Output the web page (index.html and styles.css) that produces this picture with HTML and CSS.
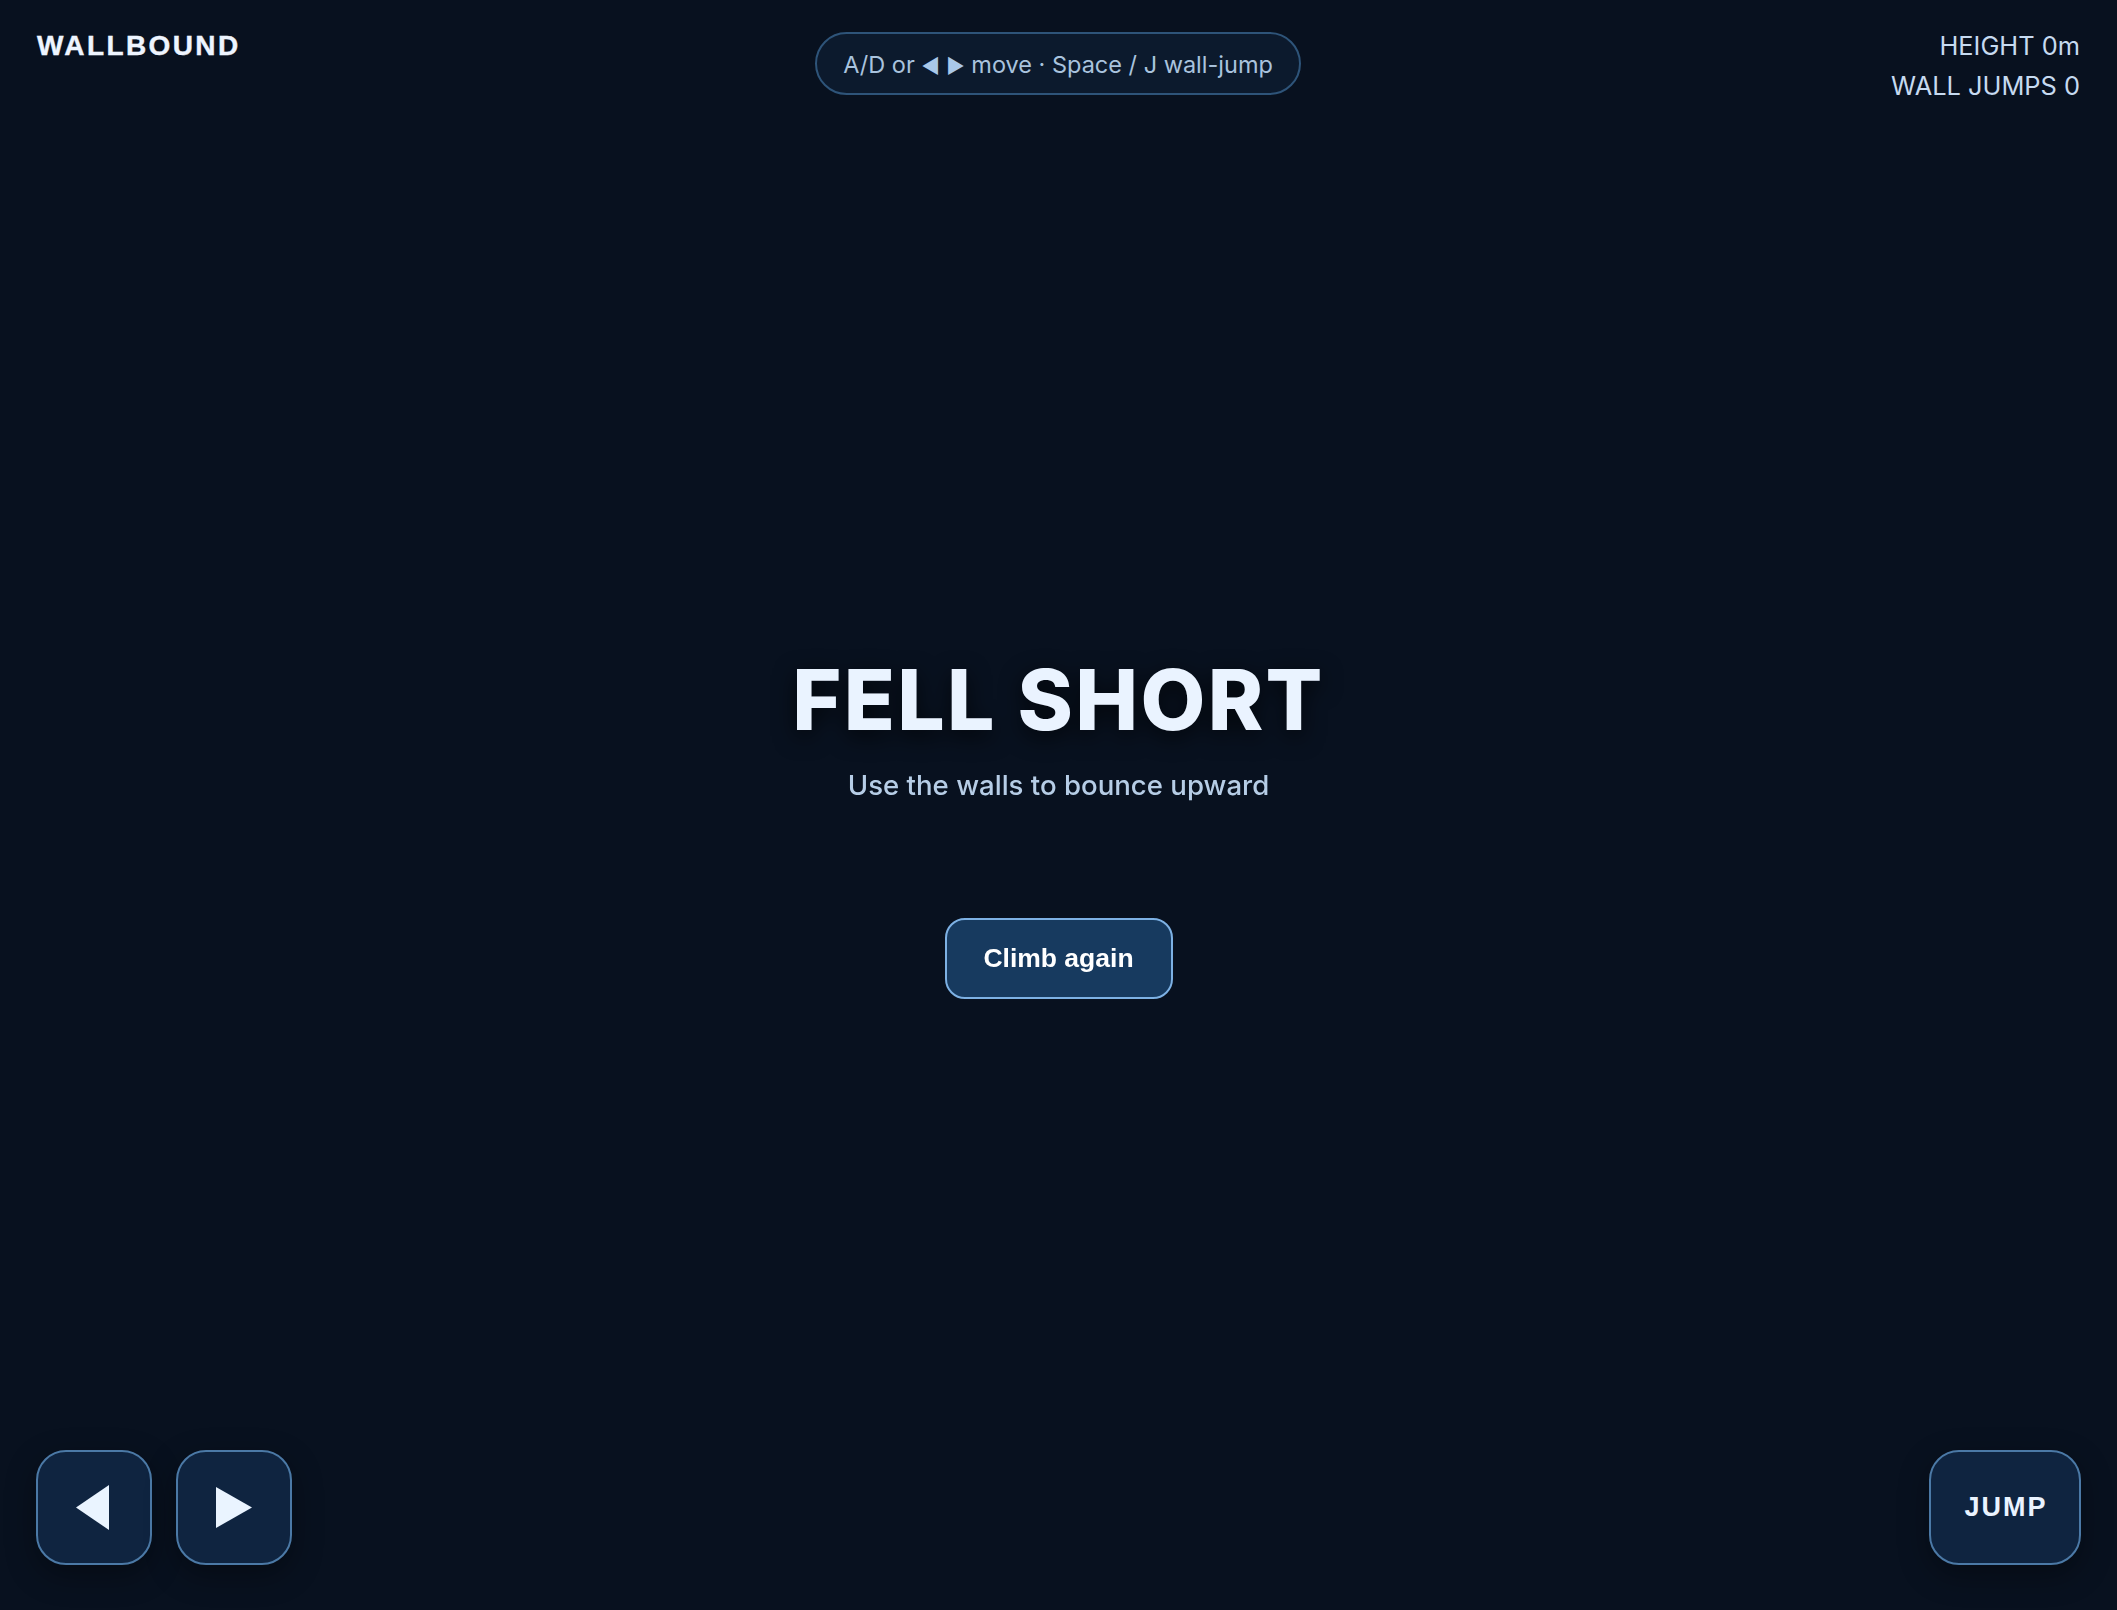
FILE: index.html
```html
<!DOCTYPE html>
<html lang="en">
<head>
<meta charset="utf-8">
<title>Wallbound</title>
<link rel="stylesheet" href="styles.css">
</head>
<body>
<div class="app">
  <header class="topbar">
    <div class="brand">WALLBOUND</div>
    <div class="hint">A/D or <span class="tri">◀</span> <span class="tri">▶</span> move · Space / J wall-jump</div>
    <div class="stats">
      <div class="stat">HEIGHT 0m</div>
      <div class="stat">WALL JUMPS 0</div>
    </div>
  </header>
  <main class="field"></main>
  <footer class="controls">
    <div class="dpad">
      <button class="pad pad-left" aria-label="Left">
        <svg width="33" height="45" viewBox="0 0 33 45"><polygon points="33,0 33,45 0,22.5" fill="#eaf4ff"/></svg>
      </button>
      <button class="pad" aria-label="Right">
        <svg width="36" height="41" viewBox="0 0 36 41"><polygon points="0,0 0,41 36,20.5" fill="#eaf4ff"/></svg>
      </button>
    </div>
    <button class="pad jump">JUMP</button>
  </footer>
</div>
<div class="overlay">
  <h1 class="title">FELL SHORT</h1>
  <p class="subtitle">Use the walls to bounce upward</p>
  <button class="again">Climb again</button>
</div>
</body>
</html>
```
FILE: styles.css
```css
html, body {
  margin: 0;
  height: 100%;
  background: #08111f;
  color: #eaf3ff;
  font-family: "Inter", "Liberation Sans", sans-serif;
  overflow: hidden;
}

.app {
  height: 100vh;
  box-sizing: border-box;
  display: grid;
  grid-template-rows: auto 1fr auto;
  padding: 26px 37px 45px 36px;
}

.topbar {
  display: grid;
  grid-template-columns: 1fr auto 1fr;
  align-items: start;
}

.brand {
  margin-top: 4px;
  margin-left: 1px;
  font-family: "Liberation Sans", Arial, sans-serif;
  font-weight: 700;
  font-size: 28px;
  letter-spacing: 2.4px;
  color: #eef5ff;
  line-height: normal;
  -webkit-text-stroke: 0.4px #eef5ff;
}

.hint {
  margin-top: 6px;
  height: 59px;
  line-height: 61px;
  padding: 0 26px;
  border: 2px solid #2e5479;
  border-radius: 32px;
  background: #0c1a2d;
  color: #a9c3de;
  font-size: 23.5px;
  white-space: nowrap;
  box-sizing: content-box;
}

.tri {
  color: #a9c8e8;
  font-size: 20px;
}

.stats {
  justify-self: end;
  text-align: right;
  font-size: 25.4px;
  line-height: 40px;
  color: #c6daf0;
}

.controls {
  display: flex;
  justify-content: space-between;
  align-items: flex-end;
  margin-right: -1px;
}

.dpad {
  display: flex;
  gap: 24px;
}

.pad {
  width: 116px;
  height: 115px;
  box-sizing: border-box;
  border: 2px solid #4b79a6;
  border-radius: 30px;
  background: #0f2440;
  box-shadow: 0 10px 30px rgba(0, 0, 0, 0.35);
  display: flex;
  align-items: center;
  justify-content: center;
  padding: 0;
}

.pad-left {
  padding-right: 3px;
}

.jump {
  width: 152px;
  font-family: "Liberation Sans", Arial, sans-serif;
  font-weight: 700;
  font-size: 27px;
  letter-spacing: 2px;
  padding-left: 2px;
  color: #eaf3ff;
}

.overlay {
  position: fixed;
  inset: 0;
  display: flex;
  flex-direction: column;
  align-items: center;
  justify-content: center;
  padding-top: 38px;
  box-sizing: border-box;
  pointer-events: none;
}

.title {
  margin: 0;
  font-size: 84px;
  line-height: 100px;
  font-weight: 800;
  letter-spacing: 2.3px;
  color: #eaf3ff;
  text-shadow: 0 6px 22px rgba(0, 0, 0, 0.7);
}

.subtitle {
  margin: 17px 0 0;
  font-size: 27.6px;
  line-height: 36px;
  font-weight: 500;
  color: #b6cde6;
}

.again {
  margin-top: 115px;
  width: 228px;
  height: 81px;
  box-sizing: border-box;
  border: 2px solid #7db1e4;
  border-radius: 20px;
  background: #173a5f;
  color: #ffffff;
  font-family: "Liberation Sans", Arial, sans-serif;
  font-weight: 700;
  font-size: 26.5px;
  pointer-events: auto;
}
```
